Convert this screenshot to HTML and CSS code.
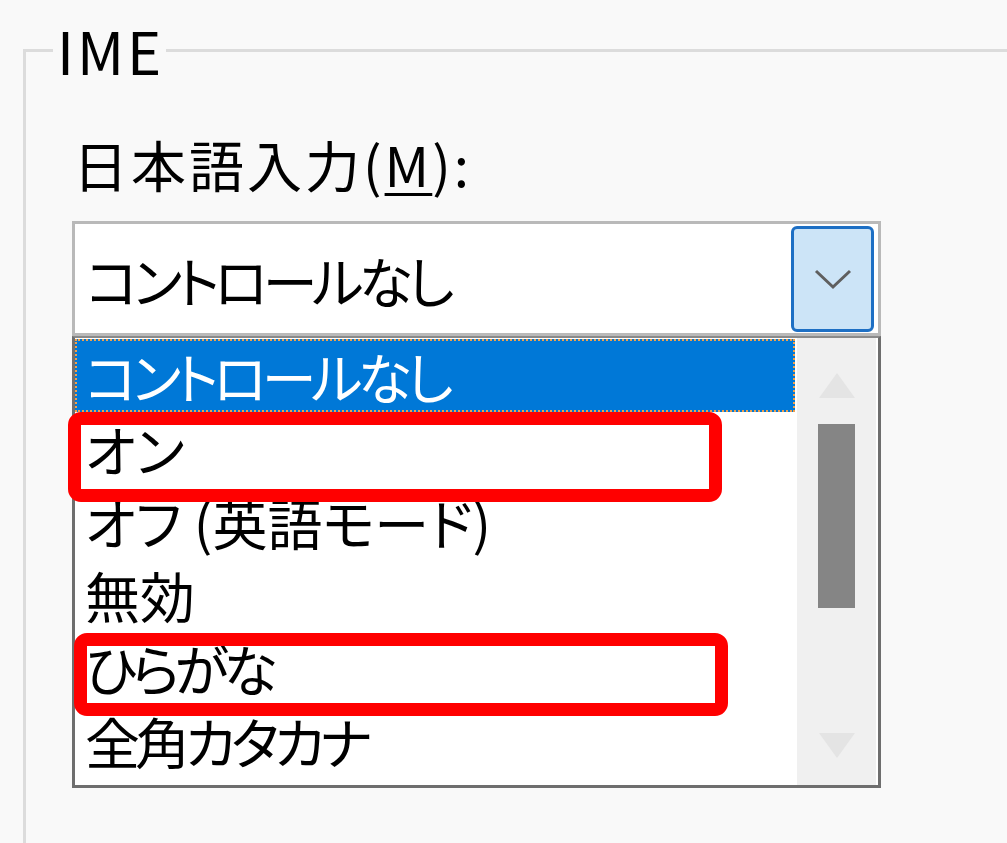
FILE: index.html
```html
<!DOCTYPE html>
<html lang="ja">
<head>
    <meta charset="UTF-8">
    <title>IME</title>
    <link rel="stylesheet" href="styles.css">
</head>
<body>
<fieldset class="group">
    <legend>IME</legend>

    <label class="field-label" for="imeMode">日本語入力(<u>M</u>):</label>

    <div class="combo" id="imeMode">
        <span class="combo-value tight">コントロールなし</span>
        <span class="combo-button">
            <svg width="38" height="22" viewBox="0 0 38 22">
                <path d="M2 3 L19 19 L36 3" fill="none" stroke="#5f5f5f" stroke-width="3"/>
            </svg>
        </span>
    </div>

    <div class="dropdown">
        <ul class="options">
            <li class="selected tight">コントロールなし</li>
            <li>オン</li>
            <li>オフ (英語モード)</li>
            <li>無効</li>
            <li class="tight">ひらがな</li>
            <li class="tight">全角カタカナ</li>
        </ul>
        <div class="scrollbar">
            <svg class="arrow" width="36" height="25" viewBox="0 0 36 25">
                <path d="M18 0 L36 25 L0 25 Z" fill="#e4e4e4"/>
            </svg>
            <div class="thumb"></div>
            <svg class="arrow arrow-down" width="36" height="25" viewBox="0 0 36 25">
                <path d="M0 0 L36 0 L18 25 Z" fill="#e4e4e4"/>
            </svg>
        </div>

        <div class="mark mark-on"></div>
        <div class="mark mark-hiragana"></div>
    </div>
</fieldset>
</body>
</html>
```

FILE: styles.css
```css
html, body {
    margin: 0;
    padding: 0;
    height: 100%;
    overflow: hidden;
}

body {
    background-color: #f9f9f9;
    font-family: "Noto Sans CJK JP", "Noto Sans", sans-serif;
    font-feature-settings: "palt";
    font-size: 55px;
    color: #000;
}

.group {
    margin: 10px 0 0 23px;
    padding: 0 0 0 46px;
    border: 3px solid #dcdcdc;
    border-right: 0;
    border-bottom: 0;
    height: calc(100% - 10px);
    box-sizing: border-box;
}

.group legend {
    margin-left: -19px;
    padding: 0 2px 0 4px;
    font-size: 58px;
    letter-spacing: 3px;
    line-height: 80px;
}

.field-label {
    display: block;
    margin-top: 38px;
    padding-left: 1px;
    letter-spacing: 3px;
    line-height: 70px;
}

.field-label u {
    text-underline-offset: 6px;
    text-decoration-thickness: 3px;
}

.tight {
    letter-spacing: -5px;
}

.combo {
    margin-top: 23px;
    width: 809px;
    height: 115px;
    box-sizing: border-box;
    display: flex;
    align-items: center;
    padding: 2px 4px 1px 11px;
    background-color: #fff;
    border: 3px solid #b9b9b9;
}

.combo-value {
    line-height: 73px;
}

.combo-button {
    margin-left: auto;
    width: 83px;
    height: 106px;
    box-sizing: border-box;
    display: flex;
    align-items: center;
    justify-content: center;
    background-color: #cce4f7;
    border: 3px solid #1d6fc4;
    border-radius: 6px;
}

.dropdown {
    position: relative;
    width: 809px;
    height: 452px;
    box-sizing: border-box;
    display: flex;
    background-color: #fff;
    border: 3px solid #6e6e6e;
    border-top: 2px solid #8a8a8a;
}

.options {
    list-style: none;
    margin: 0;
    padding: 1px 0 0;
    width: 720px;
}

.options li {
    height: 73px;
    line-height: 73px;
    padding-left: 10px;
    white-space: nowrap;
}

.options li.selected {
    background-color: #0078d7;
    color: #fff;
    outline: 2px dotted #f0a04b;
    outline-offset: -2px;
}

.scrollbar {
    margin-left: 2px;
    width: 79px;
    display: flex;
    flex-direction: column;
    align-items: center;
    padding: 35px 0 27px;
    background-color: #f0f0f0;
}

.thumb {
    margin-top: 26px;
    width: 37px;
    height: 184px;
    background-color: #858585;
}

.arrow-down {
    margin-top: auto;
}

.mark {
    position: absolute;
    width: 654px;
    box-sizing: border-box;
    border: 13px solid #ff0000;
    border-radius: 13px;
}

.mark-on {
    left: -7px;
    top: 74px;
    height: 90px;
}

.mark-hiragana {
    left: -1px;
    top: 295px;
    height: 83px;
}
```
